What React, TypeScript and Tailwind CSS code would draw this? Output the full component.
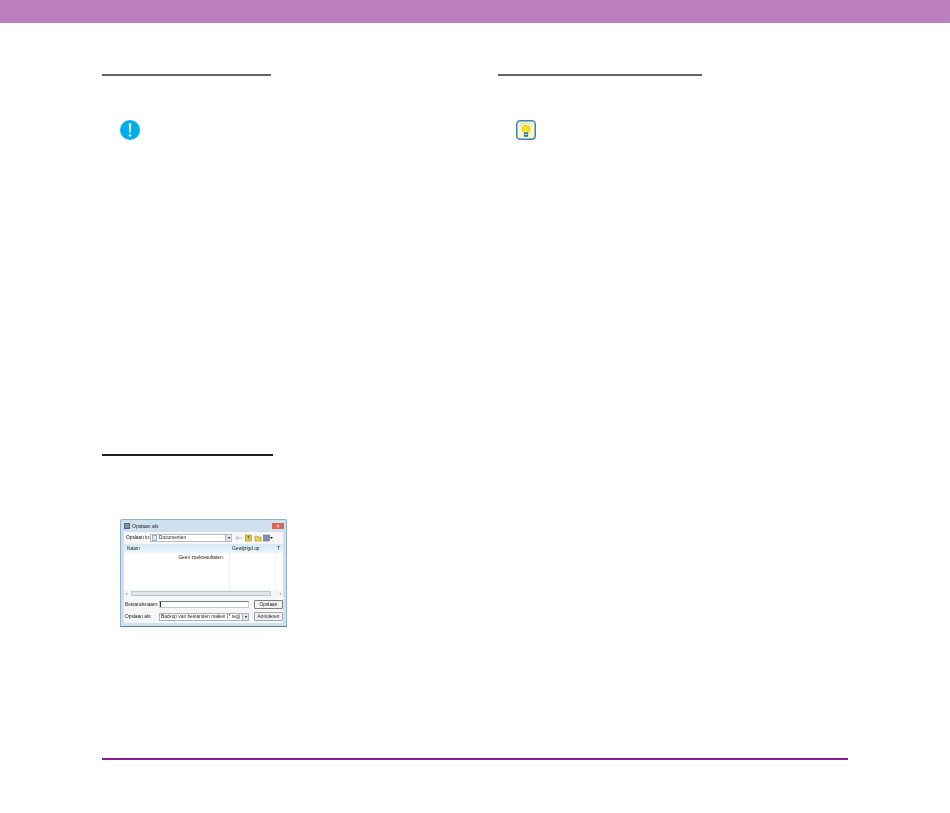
function NoteIcon() {
  return (
    <svg width="20" height="20" viewBox="0 0 20 20">
      <circle cx="10" cy="10" r="10" fill="#00aeef" />
      <path d="M8.7 3.4h2.6l-.7 9.4h-1.2z" fill="#fff" />
      <circle cx="10" cy="15.4" r="1.2" fill="#fff" />
    </svg>
  );
}

function TipIcon() {
  return (
    <svg width="20" height="20" viewBox="0 0 20 20">
      <rect x="0.75" y="0.75" width="18.5" height="18.5" rx="3.5" fill="#fdf6c4" stroke="#2f85c8" strokeWidth="1.5" />
      <path d="M10 5.4c-2.3 0-3.9 1.6-3.9 3.6 0 1.5 1 2.4 1.8 3.6h4.2c.8-1.2 1.8-2.1 1.8-3.6 0-2-1.6-3.6-3.9-3.6z" fill="#ffe11a" stroke="#a8963a" strokeWidth="0.5" />
      <rect x="7.9" y="12.6" width="4.2" height="4.2" fill="#1c75bc" />
      <rect x="8.7" y="14" width="2.6" height="0.9" fill="#fff" />
      <path d="M10 2.4v1.5M6.6 3.2l.6 1.2M13.4 3.2l-.6 1.2M4.2 5.4l1 .8M15.8 5.4l-1 .8" stroke="#8a9aa8" strokeWidth="0.7" />
    </svg>
  );
}

function ToolbarIcons() {
  return (
    <svg width="38" height="8" viewBox="0 0 38 8" className="ml-[3px]">
      <path d="M1 4h6M1 4l2.2-2M1 4l2.2 2" stroke="#9aa7b3" strokeWidth="0.8" fill="none" />
      <rect x="10.5" y="1" width="6" height="6" fill="#e8c93a" stroke="#8a7a20" strokeWidth="0.5" />
      <path d="M13.5 2v3M12.2 3.2l1.3-1.2 1.3 1.2" stroke="#2f7a2f" strokeWidth="0.7" fill="none" />
      <path d="M20 2.2h2.4l.7.8h3v4h-6.1z" fill="#f3d24a" stroke="#8a7a20" strokeWidth="0.5" />
      <rect x="28.5" y="1" width="6" height="6" fill="#7f93b5" stroke="#4d5f80" strokeWidth="0.5" />
      <path d="M35 3h3l-1.5 2z" fill="#222" />
    </svg>
  );
}

function ComboArrow() {
  return (
    <div className="flex w-[6px] h-full items-center justify-center bg-[#e4e7ec] border-l border-[#a9b3bf]">
      <div className="border-x-[1.5px] border-t-[2px] border-x-transparent border-t-black" />
    </div>
  );
}

function SaveDialog() {
  return (
    <div className="ml-[18px] mt-[63px] flex flex-col w-[167px] h-[108px] bg-[#cfe0ef] border border-[#8fb0c8] border-b-[#4f8299] rounded-t-[2px] text-[4.8px] leading-[6px] text-[#222] whitespace-nowrap blur-[0.3px]">
      <div className="flex items-center h-[12px] shrink-0 pl-[3px] pr-[2px] text-[5px]">
        <div className="w-[6px] h-[6px] bg-[#7b93a8] border border-[#506a80]" />
        <span className="ml-[2px]">Opslaan als</span>
        <div className="ml-auto w-[12px] h-[6px] bg-[#d8675a] flex items-center justify-center text-white">×</div>
      </div>
      <div className="flex flex-col flex-1 mx-[3px] mb-[3px] bg-[#f7f7f7]">
        <div className="flex items-center h-[12px] pl-[2px]">
          <span className="w-[24px]">Opslaan in:</span>
          <div className="flex items-center w-[82px] h-[8px] bg-white border border-[#b5bdc7] pl-[1px]">
            <div className="w-[5px] h-[6px] bg-[#dfe9f3] border border-[#9fb2c4]" />
            <span className="ml-[2px]">Documenten</span>
            <div className="ml-auto h-full">
              <ComboArrow />
            </div>
          </div>
          <ToolbarIcons />
        </div>
        <div className="flex flex-col h-[53px] bg-white">
          <div className="flex h-[9px] shrink-0 items-center bg-gradient-to-b from-[#d3e8f6] to-[#eef6fb]">
            <span className="w-[105px] pl-[3px]">Naam</span>
            <span className="w-[46px] pl-[2px] border-l border-[#eef3f8]">Gewijzigd op</span>
            <span className="pl-[1px] border-l border-[#eef3f8]">T</span>
          </div>
          <div className="flex flex-1">
            <div className="w-[105px] pt-[2px] pr-[5px] text-right">Geen zoekresultaten.</div>
            <div className="w-[46px] border-l border-[#eef0f3]" />
            <div className="flex-1 border-l border-[#eef0f3]" />
          </div>
          <div className="flex items-center h-[7px] shrink-0 bg-[#f4f5f7] px-[2px]">
            <span className="w-[5px] text-[#555]">‹</span>
            <div className="w-[140px] h-[5px] bg-[#e2e6eb] border border-[#c0c6cd]" />
            <span className="ml-auto text-[#555]">›</span>
          </div>
        </div>
        <div className="flex items-center mt-[3px] h-[9px] pl-[1px]">
          <span className="w-[34px]">Bestandsnaam:</span>
          <div className="w-[90px] h-[7px] bg-white border border-[#c5cad1] border-t-[#777]">
            <div className="w-px h-full bg-[#333]" />
          </div>
          <div className="ml-[5px] flex items-center justify-center w-[29px] h-[9px] bg-[#f2f2f2] border border-[#808080] rounded-[1px]">Opslaan</div>
        </div>
        <div className="flex items-center mt-[3px] h-[9px] pl-[1px]">
          <span className="w-[34px]">Opslaan als:</span>
          <div className="flex items-center w-[90px] h-[8px] bg-white border border-[#a9b3bf] pl-[1px]">
            <span>Backup van bestanden maken (*.reg)</span>
            <div className="ml-auto h-full">
              <ComboArrow />
            </div>
          </div>
          <div className="ml-[5px] flex items-center justify-center w-[29px] h-[9px] bg-[#f2f2f2] border border-[#a5a5a5] rounded-[1px]">Annuleren</div>
        </div>
      </div>
    </div>
  );
}

export default function App() {
  return (
    <div className="flex flex-col w-[950px] h-[813px] bg-white" style={{ fontFamily: '"Liberation Sans", Arial, sans-serif' }}>
      <div className="h-[23px] shrink-0 bg-[#bb7fbe]" />
      <div className="flex flex-1 pl-[102px] pt-[51px]">
        <div className="flex flex-col w-[396px]">
          <div className="w-[169px] h-[2px] bg-[#666]" />
          <div className="ml-[18px] mt-[44px]">
            <NoteIcon />
          </div>
          <div className="w-[171px] h-[2px] mt-[314px] bg-[#222]" />
          <SaveDialog />
        </div>
        <div className="flex flex-col">
          <div className="w-[204px] h-[2px] bg-[#666]" />
          <div className="ml-[18px] mt-[44px]">
            <TipIcon />
          </div>
        </div>
      </div>
      <div className="mx-[102px] mb-[53px] h-[2px] bg-[#8e1b96]" />
    </div>
  );
}
